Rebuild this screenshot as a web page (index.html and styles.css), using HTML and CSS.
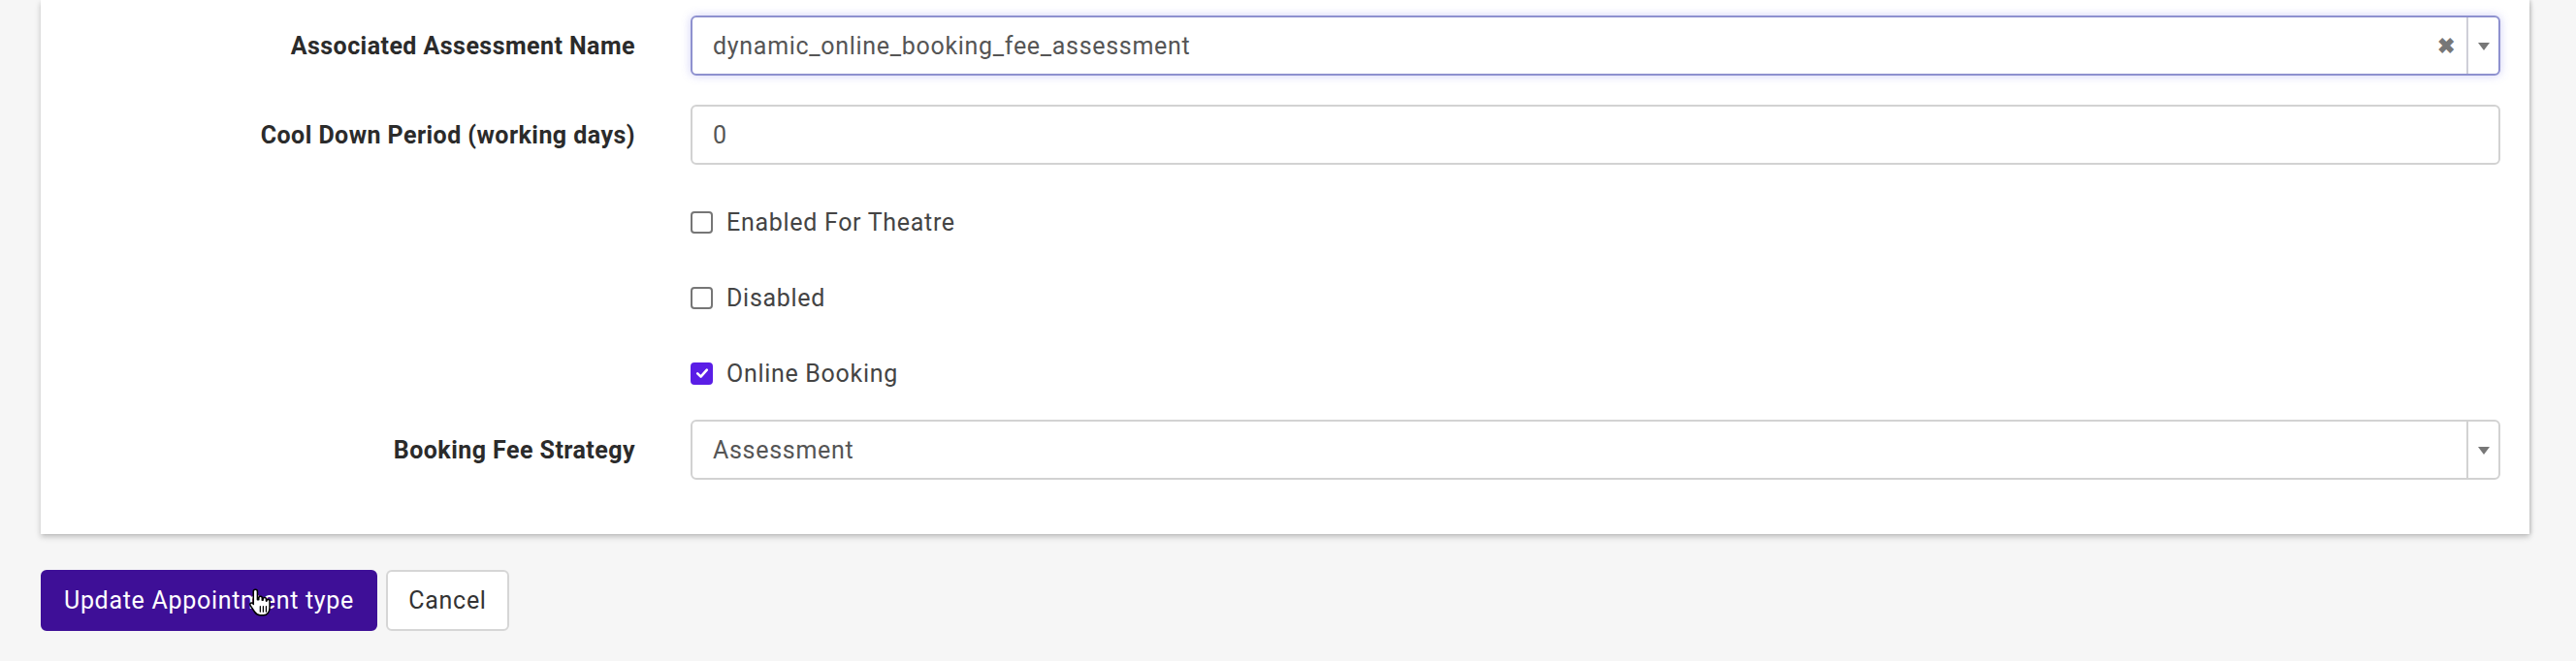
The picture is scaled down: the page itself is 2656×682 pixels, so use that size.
FILE: index.html
```html
<!DOCTYPE html>
<html>
<head>
<meta charset="utf-8">
<link rel="stylesheet" href="styles.css">
</head>
<body>
<div class="page">
  <div class="card">
    <form class="form">
      <div class="group">
        <label class="label">Associated Assessment Name</label>
        <div class="select select-focus">
          <span class="select-value">dynamic_online_booking_fee_assessment</span>
          <span class="select-clear">&#x2716;</span>
          <span class="select-arrow"><span class="tri"></span></span>
        </div>
      </div>
      <div class="group group-before-checks">
        <label class="label">Cool Down Period (working days)</label>
        <div class="input"><span class="input-value">0</span></div>
      </div>
      <div class="group check-group">
        <span class="label"></span>
        <label class="check"><span class="box"></span><span class="check-text">Enabled For Theatre</span></label>
      </div>
      <div class="group check-group">
        <span class="label"></span>
        <label class="check"><span class="box"></span><span class="check-text">Disabled</span></label>
      </div>
      <div class="group check-group check-last">
        <span class="label"></span>
        <label class="check"><span class="box box-on"><svg viewBox="0 0 16 16" width="16" height="16"><path d="M3.2 8.4 L6.6 11.6 L12.8 4.6" fill="none" stroke="#fff" stroke-width="2.6" stroke-linecap="round" stroke-linejoin="round"/></svg></span><span class="check-text">Online Booking</span></label>
      </div>
      <div class="group last">
        <label class="label">Booking Fee Strategy</label>
        <div class="select">
          <span class="select-value">Assessment</span>
          <span class="select-arrow"><span class="tri"></span></span>
        </div>
      </div>
    </form>
  </div>
  <div class="actions">
    <button class="btn btn-primary" type="button">Update Appointment type</button>
    <button class="btn btn-default" type="button">Cancel</button>
    <svg class="cursor" viewBox="0 0 18 22" width="25" height="31"><path d="M6 1.5 C6.9 1.5 7.5 2.1 7.5 3 V9 H8.5 V7.8 C8.5 7 9.1 6.5 9.8 6.5 C10.5 6.5 11 7 11 7.8 V9.3 H11.6 V8.6 C11.6 7.9 12.2 7.4 12.8 7.4 C13.5 7.4 14 7.9 14 8.6 V10 H14.4 C14.4 9.4 14.9 8.9 15.5 8.9 C16.1 8.9 16.6 9.4 16.6 10 V15 C16.6 18 14.8 20.5 12 20.5 H9.5 C7.5 20.5 6.4 19.5 5.4 18 L2.2 13.2 C1.8 12.6 2 11.8 2.6 11.5 C3.2 11.2 3.9 11.4 4.3 12 L4.5 12.4 V3 C4.5 2.1 5.1 1.5 6 1.5 Z" fill="#fff" stroke="#000" stroke-width="1.1" stroke-linejoin="round"/><path d="M9.6 14 V18 M11.8 14 V18 M14 14 V18" stroke="#000" stroke-width="0.9" stroke-linecap="round"/></svg>
  </div>
</div>
</body>
</html>
```
FILE: styles.css
```css
html, body {
  margin: 0;
  padding: 0;
  background: #f6f6f6;
  font-family: Roboto, "Liberation Sans", Arial, sans-serif;
  font-size: 25px;
  letter-spacing: 0.7px;
  color: #333;
}

.page {
  padding: 0 48px 0 42px;
}

.card {
  background: #fff;
  box-shadow: 0 3px 6px rgba(0, 0, 0, 0.22), 2px 0 3px rgba(0, 0, 0, 0.10);
  padding: 16px 30px 26px 0;
}

.form {
  display: flex;
  flex-direction: column;
}

.group {
  display: grid;
  grid-template-columns: 613px 1fr;
  column-gap: 57px;
  align-items: center;
  margin-bottom: 30px;
}

.group-before-checks {
  margin-bottom: 28px;
}

.check-group {
  height: 62px;
  margin-bottom: 16px;
}

.check-last {
  margin-bottom: 17px;
}

.group.last {
  margin-bottom: 30px;
}

.label {
  text-align: right;
  font-weight: 700;
  letter-spacing: 0.45px;
  color: #2b2b2b;
}

.input, .select {
  box-sizing: border-box;
  height: 62px;
  border: 2px solid #d2d2d2;
  border-radius: 6px;
  background: #fff;
  display: flex;
  align-items: center;
  color: #555;
}

.input-value, .select-value {
  padding-left: 21px;
  flex: 1;
}

.select-focus {
  border-color: #8e91cf;
  box-shadow: 0 0 10px rgba(120, 120, 230, 0.35);
}

.select-clear {
  color: #777;
  font-size: 22px;
  font-weight: 700;
  width: 24px;
  text-align: center;
  margin-right: 9px;
  letter-spacing: 0;
}

.select-arrow {
  align-self: stretch;
  width: 31px;
  border-left: 2px solid #d2d2d2;
  display: flex;
  align-items: center;
  justify-content: center;
}

.select-focus .select-arrow {
  border-left-color: #cfcfd8;
}

.tri {
  width: 0;
  height: 0;
  border-left: 6px solid transparent;
  border-right: 6px solid transparent;
  border-top: 8px solid #777;
  margin-top: 2px;
}

.check {
  display: flex;
  align-items: center;
  color: #444;
}

.box {
  box-sizing: border-box;
  width: 23px;
  height: 23px;
  border: 2px solid #767676;
  border-radius: 4px;
  background: #fff;
  margin-right: 14px;
  display: flex;
  align-items: center;
  justify-content: center;
}

.box-on {
  background: #5a1ee6;
  border-color: #5a1ee6;
}

.actions {
  position: relative;
  display: flex;
  gap: 9px;
  padding-top: 37px;
}

.btn {
  box-sizing: border-box;
  height: 63px;
  border-radius: 6px;
  font-family: Roboto, "Liberation Sans", Arial, sans-serif;
  font-size: 25px;
  letter-spacing: 0.7px;
  padding: 0;
  cursor: pointer;
}

.btn-primary {
  background: #3e0f97;
  border: 2px solid #3e0f97;
  color: #fff;
  width: 347px;
}

.btn-default {
  background: #fff;
  border: 2px solid #d6d6d6;
  color: #333;
  width: 127px;
}

.cursor {
  position: absolute;
  left: 213px;
  top: 55px;
}
```
